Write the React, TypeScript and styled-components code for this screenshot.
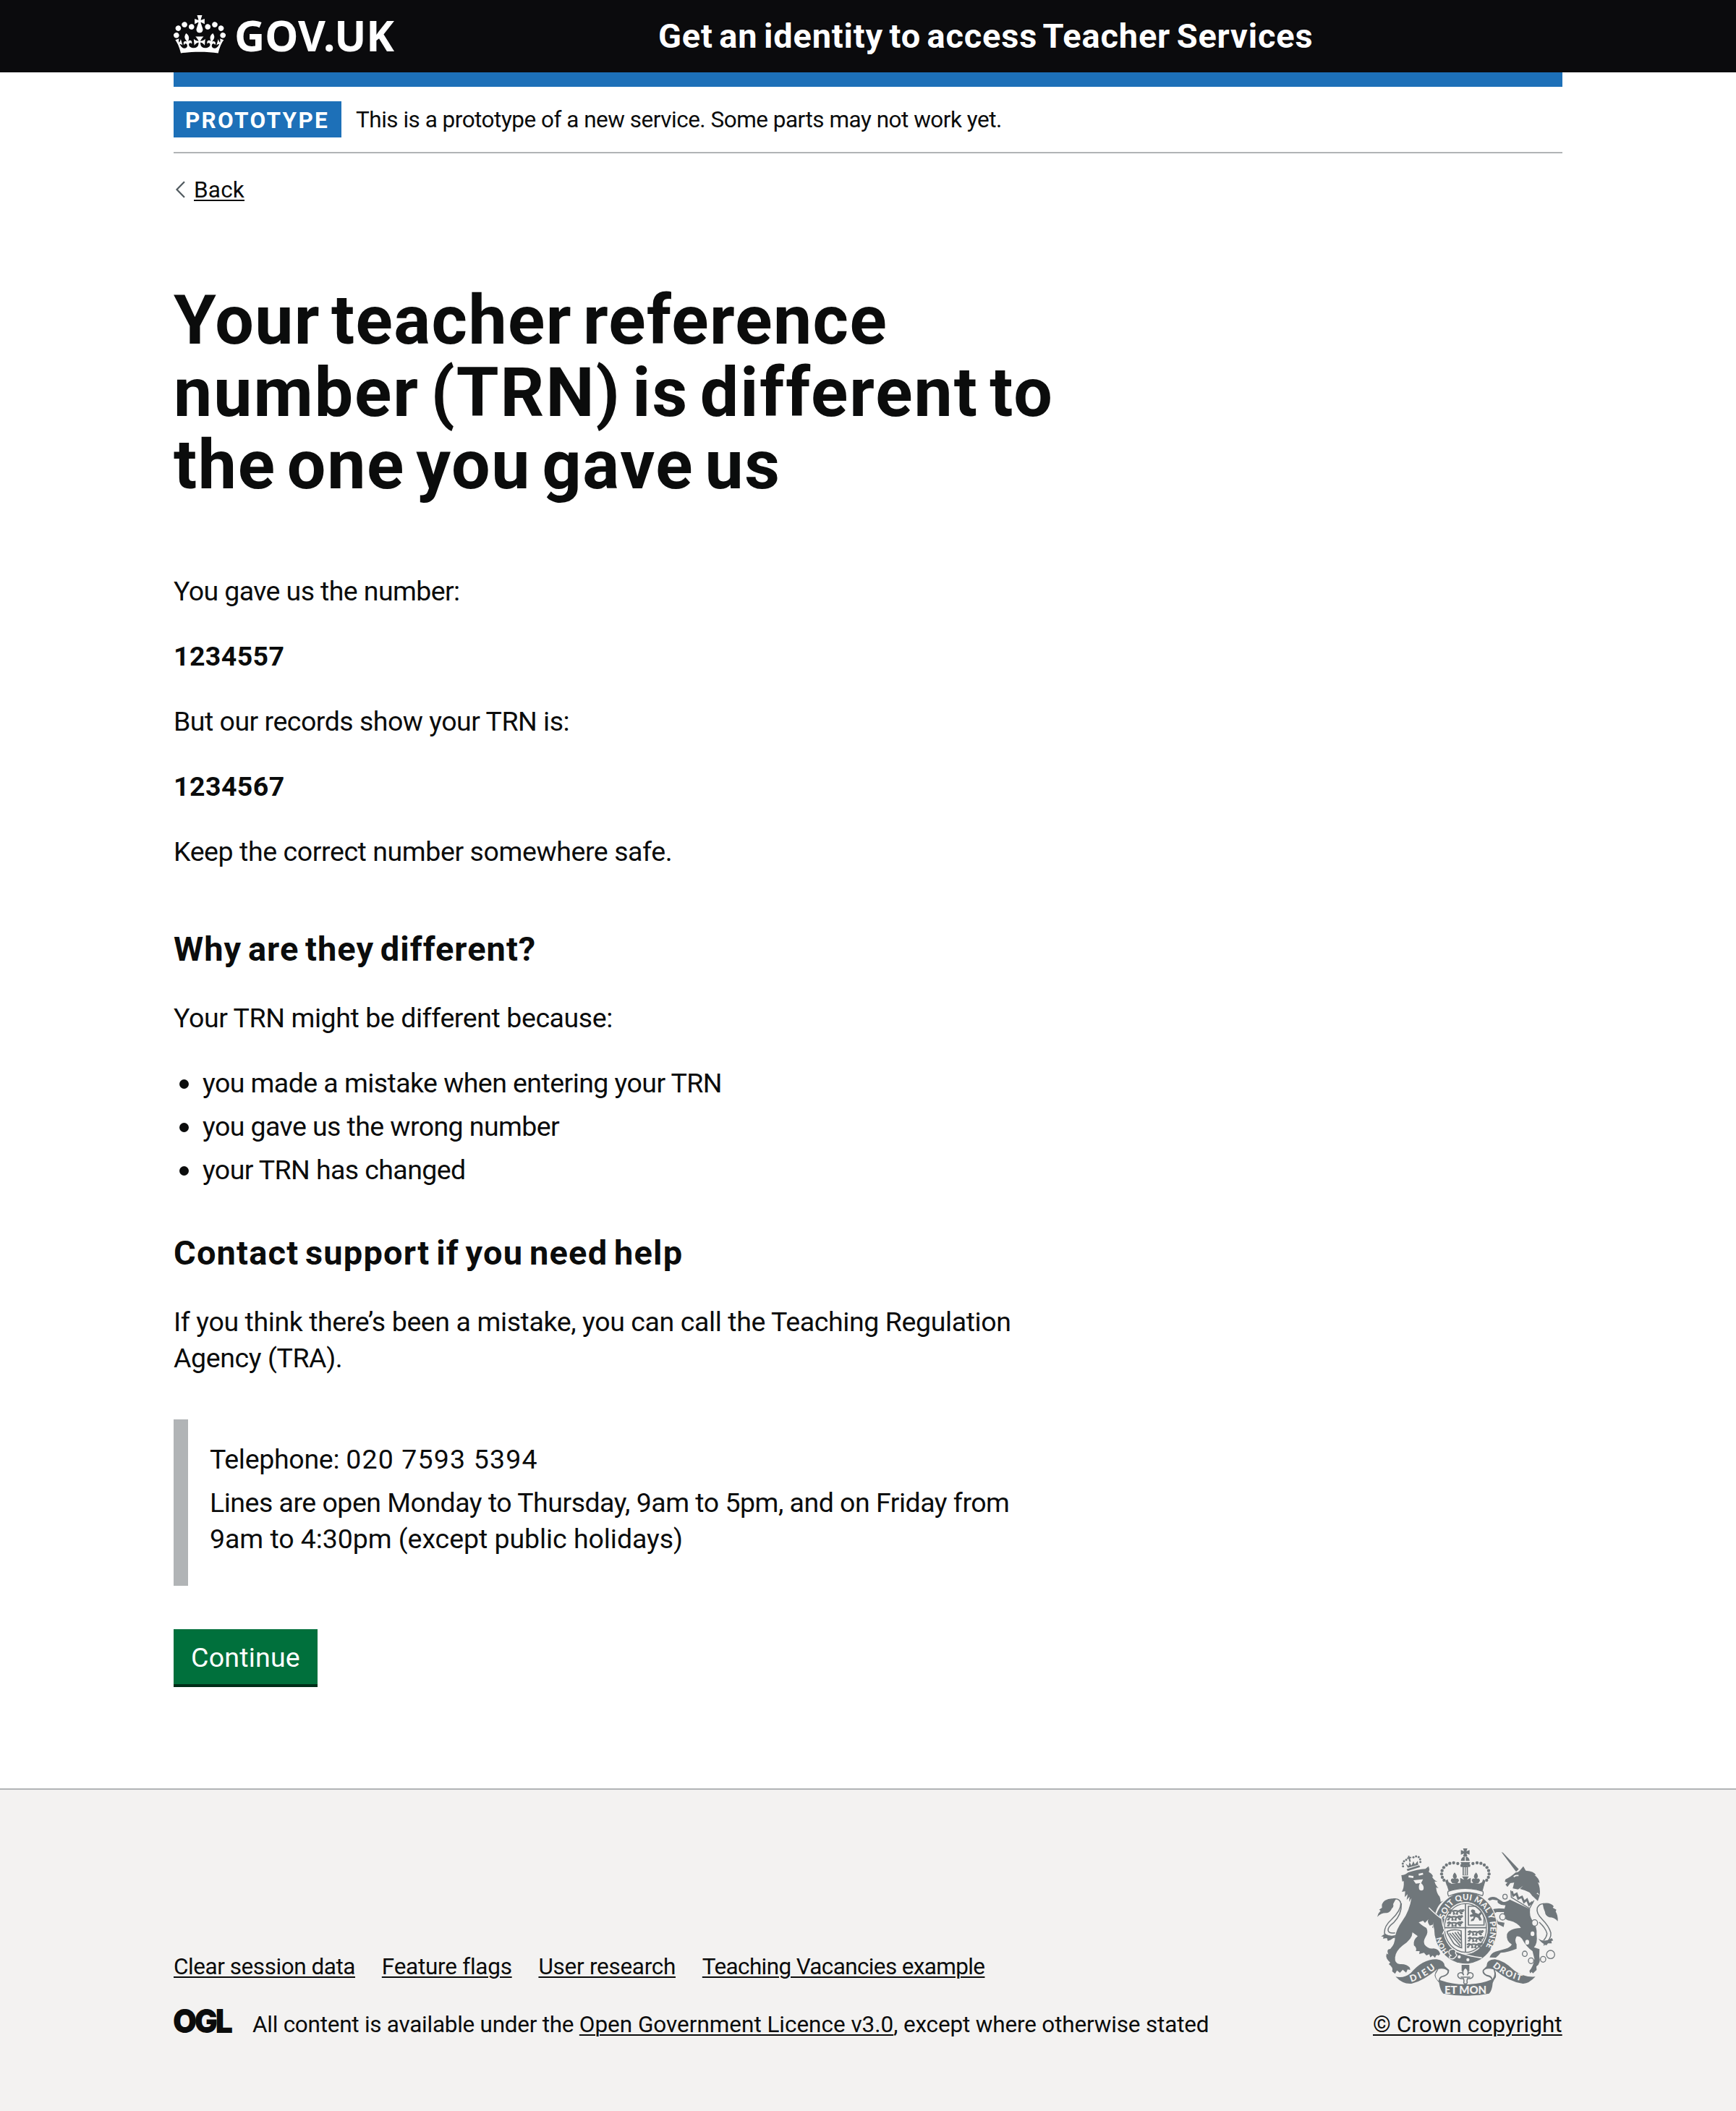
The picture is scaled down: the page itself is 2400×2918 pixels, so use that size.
import React from "react";
import styled, { createGlobalStyle } from "styled-components";

const ink = "#0b0c0c";
const blue = "#1d70b8";
const midGrey = "#b1b4b6";
const paleGrey = "#f3f2f1";
const armsGrey = "#70777b";
const sans = `Roboto, "Liberation Sans", sans-serif`;

const GlobalStyle = createGlobalStyle`
  html, body { margin: 0; padding: 0; background: ${paleGrey}; }
  body { font-family: ${sans}; color: ${ink}; }
  *, *::before, *::after { box-sizing: border-box; }
`;

const Page = styled.div`
  width: 2400px;
  min-height: 2918px;
  display: flex;
  flex-direction: column;
  background: #fff;
`;

const Container = styled.div`
  width: 1920px;
  margin: 0 auto;
`;

/* Header */
const Header = styled.header`
  height: 100px;
  background: #0b0b0d;
  color: #fff;
`;
const HeaderInner = styled(Container)`
  display: grid;
  grid-template-columns: 670px 1fr;
  align-items: start;
`;
const Logo = styled.a`
  display: flex;
  align-items: flex-start;
  color: inherit;
  gap: 12px;
`;
const CrownMark = styled.svg`
  display: block;
  width: 72px;
  height: 53px;
  margin-top: 21px;
  fill: #fff;
`;
const LogoText = styled.span`
  font: 700 58.4px/79px "Noto Sans", sans-serif;
  margin-top: 9px;
`;
const ServiceName = styled.a`
  font-size: 47px;
  font-weight: 700;
  line-height: 55px;
  padding-top: 22px;
  letter-spacing: 0.82px;
  word-spacing: -4px;
  white-space: nowrap;
`;

/* Phase banner */
const BlueBar = styled.div`
  height: 20px;
  background: ${blue};
`;
const PhaseBanner = styled.div`
  height: 92px;
  display: flex;
  align-items: center;
  gap: 20px;
  padding-top: 1px;
  border-bottom: 2px solid ${midGrey};
`;
const Tag = styled.strong`
  width: 232px;
  height: 50px;
  padding: 8px 0 0 16px;
  margin-top: -1px;
  background: ${blue};
  color: #fff;
  font-size: 31.5px;
  line-height: 37px;
  letter-spacing: 2.308px;
`;
const SmallText = styled.span<{ $track: number }>`
  font-size: 31.5px;
  line-height: 40px;
  letter-spacing: ${(p) => p.$track}px;
  white-space: pre;
`;
const PhaseText = styled(SmallText)`
  padding-top: 1px;
`;
const BackRow = styled.a`
  display: flex;
  align-items: center;
  width: max-content;
  margin-top: 31px;
  height: 40px;
`;
const Chevron = styled.svg`
  width: 28px;
  height: 40px;
  fill: none;
  stroke: #505a5f;
  stroke-width: 2.2;
`;
const Link = styled(SmallText)`
  color: ${ink};
  text-decoration: underline;
  text-decoration-thickness: 2px;
  text-underline-offset: 3px;
`;

/* Main content */
const Main = styled.main`
  flex: 1;
  padding-top: 110px;
`;
const Heading = styled.h1`
  margin: 0 0 99px;
  font-size: 95px;
  line-height: 100px;
  font-weight: 700;
  word-spacing: -10px;
`;
const SubHeading = styled.h2<{ $gap: number }>`
  margin: ${(p) => p.$gap}px 0 40px;
  font-size: 47px;
  line-height: 60px;
  font-weight: 700;
  word-spacing: -4px;
`;
const Paragraph = styled.p<{ $bold?: boolean }>`
  margin: 0 0 40px;
  font-size: 37.5px;
  line-height: 50px;
  font-weight: ${(p) => (p.$bold ? 700 : 400)};
`;
const Line = styled.span<{ $track: number }>`
  display: block;
  letter-spacing: ${(p) => p.$track}px;
  white-space: nowrap;
`;
const PhoneNumber = styled.span`
  letter-spacing: 1.15px;
`;
const BulletList = styled.ul`
  list-style: none;
  margin: 0;
  padding: 0;
  display: flex;
  flex-direction: column;
  gap: 10px;
  font-size: 37.5px;
  line-height: 50px;
`;
const Bullet = styled.li`
  display: flex;
  align-items: center;
  padding-left: 8px;
  &::before {
    content: "";
    width: 13px;
    height: 13px;
    margin: 3px 19px 0 0;
    border-radius: 50%;
    background: ${ink};
  }
`;
const Inset = styled.div`
  width: 1200px;
  margin-top: 60px;
  padding: 30px 0 40px 30px;
  border-left: 20px solid ${midGrey};
  display: flex;
  flex-direction: column;
  gap: 10px;
  p { margin: 0; }
`;
const Button = styled.button`
  display: block;
  width: 199px;
  height: 76px;
  margin: 60px 0 0;
  padding: 2px 0 0 0;
  border: 0;
  background: #00703c;
  box-shadow: 0 4px 0 #002d18;
  color: #fff;
  font: 400 37.5px/44px ${sans};
  letter-spacing: 0.2px;
`;

/* Footer */
const Footer = styled.footer`
  height: 446px;
  border-top: 2px solid ${midGrey};
  background: ${paleGrey};
`;
const FooterInner = styled(Container)`
  height: 345px;
  display: flex;
  justify-content: space-between;
  align-items: flex-end;
`;
const FooterLinks = styled.nav`
  display: flex;
  gap: 36.8px;
  margin-bottom: 40px;
`;
const Licence = styled.div`
  display: flex;
  align-items: center;
`;
const LicenceLogo = styled.svg`
  width: 82px;
  height: 36px;
  margin: -4px 27px 8px 0;
  overflow: visible;
  fill: ${ink};
  font: 900 46px Inter, sans-serif;
`;
const Copyright = styled.div`
  width: 262px;
  display: flex;
  flex-direction: column;
`;
const ArmsImage = styled.svg`
  width: 250px;
  height: 204px;
  margin: 0 0 20px 6px;
  fill: ${armsGrey};
  font-family: Lato, "Noto Sans", sans-serif;
  font-weight: 900;
`;

const Crown = () => (
  <CrownMark viewBox="0 0 132 97" aria-hidden="true">
    <path d="M25 30.2c3.5 1.5 7.7-.2 9.1-3.7 1.5-3.6-.2-7.8-3.9-9.2-3.6-1.4-7.6.3-9.1 3.9-1.4 3.5.3 7.5 3.9 9zM9 39.5c3.6 1.5 7.8-.2 9.2-3.7 1.5-3.6-.2-7.8-3.9-9.1-3.6-1.5-7.6.2-9.1 3.8-1.4 3.5.3 7.5 3.8 9zM4.4 57.2c3.5 1.5 7.7-.2 9.1-3.8 1.5-3.6-.2-7.7-3.9-9.1-3.5-1.5-7.6.3-9.1 3.8-1.4 3.5.3 7.6 3.9 9.1zm38.3-21.4c3.5 1.5 7.7-.2 9.1-3.8 1.5-3.6-.2-7.7-3.9-9.1-3.6-1.5-7.6.3-9.1 3.8-1.3 3.6.4 7.7 3.9 9.1zm64.4-5.6c-3.6 1.5-7.8-.2-9.1-3.7-1.5-3.6.2-7.8 3.8-9.2 3.6-1.4 7.7.3 9.2 3.9 1.3 3.5-.4 7.5-3.9 9zm15.9 9.3c-3.6 1.5-7.7-.2-9.1-3.7-1.5-3.6.2-7.8 3.7-9.1 3.6-1.5 7.7.2 9.2 3.8 1.5 3.5-.3 7.5-3.8 9zm4.7 17.7c-3.6 1.5-7.8-.2-9.2-3.8-1.5-3.6.2-7.7 3.9-9.1 3.6-1.5 7.7.3 9.2 3.8 1.3 3.5-.4 7.6-3.9 9.1zM89.3 35.8c-3.6 1.5-7.8-.2-9.2-3.8-1.4-3.6.2-7.7 3.9-9.1 3.6-1.5 7.7.3 9.2 3.8 1.4 3.6-.3 7.7-3.9 9.1zM69.7 17.7l8.9 4.7V9.3l-8.9 2.8c-.2-.3-.5-.6-.9-.9L72.4 0H59.6l3.5 11.2c-.3.3-.6.5-.9.9l-8.8-2.8v13.1l8.8-4.7c.3.3.6.7.9.9l-5 15.4v.1c-.2.8-.4 1.6-.4 2.4 0 4.1 3.1 7.5 7 8.1h.2c.3 0 .7.1 1 .1.4 0 .7 0 1-.1h.2c4-.6 7.1-4.1 7.1-8.1 0-.8-.1-1.7-.4-2.4V34l-5.1-15.4c.4-.2.7-.6 1-.9zM66 92.8c16.9 0 32.8 1.1 47.1 3.2 4-16.9 8.9-26.7 14-33.5l-9.6-3.4c1 4.9 1.1 7.2 0 10.2-1.5-1.4-3-4.3-4.2-8.7L108.6 76c2.8-2 5-3.2 7.5-3.3-4.4 9.4-10 11.9-13.6 11.2-4.3-.8-6.3-4.6-5.6-7.9 1-4.7 5.7-5.9 8-.5 4.3-8.7-3-11.4-7.6-8.8 7.1-7.2 7.9-13.5 2.1-21.1-8 6.1-8.1 12.3-4.5 20.8-4.7-5.4-12.1-2.5-9.5 6.2 3.4-5.2 7.9-2 7.2 3.1-.6 4.3-6.4 7.8-13.5 7.2-10.3-.9-10.9-8-11.2-13.8 2.5-.5 7.1 1.8 11 7.3L80.2 60c-4.1 4.4-8 5.3-12.3 5.4 1.4-4.4 8-11.6 8-11.6H55.5s6.4 7.2 7.9 11.6c-4.2-.1-8-1-12.3-5.4l1.4 16.4c3.9-5.5 8.5-7.7 10.9-7.3-.3 5.8-.9 12.8-11.1 13.8-7.2.6-12.9-2.9-13.5-7.2-.7-5 3.8-8.3 7.1-3.1 2.7-8.7-4.6-11.6-9.4-6.2 3.7-8.5 3.6-14.7-4.6-20.8-5.8 7.6-5 13.9 2.2 21.1-4.7-2.6-11.9.1-7.7 8.8 2.3-5.5 7.1-4.2 8.1.5.7 3.3-1.3 7.1-5.7 7.9-3.5.7-9-1.8-13.5-11.2 2.5.1 4.7 1.3 7.5 3.3l-4.7-15.4c-1.2 4.4-2.7 7.2-4.3 8.7-1.1-3-.9-5.3 0-10.2l-9.5 3.4c5 6.9 9.9 16.7 14 33.5 14.8-2.1 30.8-3.2 47.7-3.2z" />
  </CrownMark>
);

const crownBeads: [number, number][] = [
  [423, 143], [406, 135], [389, 132], [373, 134], [359, 141], [348, 151], [341, 164], [339, 178], [342, 192], [349, 204],
];
const smallBeads: [number, number][] = [
  [179, 146], [178, 135], [183, 125], [192, 119], [222, 109], [233, 105], [244, 108], [250, 117], [251, 128],
];
const bodyRings: [number, number, number][] = [
  [602, 272, 10], [592, 356, 13], [725, 381, 13], [684, 509, 11], [710, 538, 12], [760, 532, 12],
];
const bodySpots: [number, number][] = [[716, 426], [694, 461]];

const MiniLion = ({ x, y }: { x: number; y: number }) => (
  <path
    transform={`translate(${x} ${y})`}
    fill="none"
    stroke={armsGrey}
    strokeWidth="6.5"
    d="M2 8 l8 -5 l8 4 q14 -4 24 1 l10 -5 q6 0 4 6 l8 -2 M12 8 l-4 9 l-6 0 M22 10 l4 8 l-6 2 M40 9 l-5 9 l6 2 M48 9 l6 8 l6 -1 M56 6 q8 -8 10 0"
  />
);

const RoyalArms = () => (
  <ArmsImage viewBox="72 72 750 612" aria-label="Royal coat of arms">
    <defs>
      <path id="garterTop" d="M352 366 C362 318 394 286 438 286 C503 286 541 345 541 402 C541 452 524 492 488 514" />
      <path id="garterLow" d="M368 502 Q342 472 336 430" />
      <path id="ribbonLeft" d="M212 626 Q270 610 318 566" />
      <path id="ribbonRight" d="M550 562 Q600 606 676 624" />
    </defs>

    {/* Lion */}
    <path d="M194 158 L246 142 L250 149 L198 166Z M199 152 L190 135 L202 145 L206 129 L214 143 L222 125 L228 139 L240 124 L242 140Z" />
    <path d="M202 102h6v6h6v6h-6v14h-6v-14h-6v-6h6z" transform="rotate(-14 206 114)" />
    {smallBeads.map(([x, y]) => <circle key={`${x}-${y}`} cx={x} cy={y} r="4.5" />)}
    <path d="M172 183 Q188 183 200 172 Q240 158 272 157 L285 146 Q291 158 286 170 Q300 176 304 190 L299 188 Q305 202 322 210 L310 209 Q312 222 326 237 L316 234 Q318 260 331 272 Q335 284 335 294 L347 289 Q330 301 320 322 L313 340 L338 368 Q340 390 348 412 L340 423 L336 411 L330 428 L322 412 L314 424 Q306 414 310 398 L300 402 L304 388 L290 392 Q278 378 284 366 L270 381 L262 372 L244 379 Q254 390 276 402 Q286 420 272 440 Q262 456 268 470 Q282 490 306 487 Q328 489 333 510 L326 517 Q318 508 312 526 L302 516 L292 524 L288 511 L276 516 L266 505 L246 510 L248 498 L232 498 Q238 484 224 474 Q220 452 240 436 L218 420 Q218 448 178 474 Q148 498 146 524 Q144 550 166 552 Q194 550 207 566 L209 576 L198 574 L192 587 L178 575 L166 588 L154 578 L146 592 L134 582 Q140 566 120 552 L126 545 Q104 528 111 508 L118 512 Q108 490 126 489 Q146 468 146 440 Q150 410 178 370 Q206 330 214 278 L204 294 L206 272 L194 286 L198 262 L186 274 L188 250 L174 252 Q184 236 182 208 L176 209Z" />
    <path d="M202 188 l20 3 M244 181 l18 -4" stroke={paleGrey} strokeWidth="8" fill="none" />
    <path d="M222 204 L262 200 L254 216 Q268 228 264 242 Q256 252 246 242 Q242 226 250 216 L232 218Z" fill={paleGrey} />
    <path d="M152 440 Q112 446 102 424 Q100 394 132 366 Q170 330 170 300 Q166 278 138 282 M146 422 Q120 426 117 412 Q116 398 140 380 Q174 346 172 300" fill="none" stroke={armsGrey} strokeWidth="4.5" />
    <path d="M150 281 Q122 276 104 288 Q88 300 92 318 L80 326 L86 331 Q76 340 72 356 Q90 338 112 340 Q128 336 132 322 Q142 314 138 303 Q144 290 150 281Z M152 430 Q128 440 104 426 L88 437 L98 438 L96 446 L112 444 L116 456 Q140 448 152 430Z" />

    {/* Unicorn */}
    <path d="M587 87 L594 90 L659 158 L648 169Z" />
    <path d="M646 172 Q660 170 668 158 L678 146 L688 164 Q724 166 730 184 L724 182 Q746 198 745 216 L738 212 Q750 236 746 266 L737 256 L730 262 L714 252 L706 256 L684 246 L664 240 Q680 226 690 202 Q684 226 656 242 L634 238 L640 214 L624 216 L612 232 L604 222 L612 214 L601 210 L604 200 Q624 192 646 172Z" />
    <path d="M690 236 L714 268 L738 290 L746 266Z" />
    <path d="M638 190 q8 -8 20 -5" stroke={paleGrey} strokeWidth="5" fill="none" />
    <path d="M630 250 L636 268 L650 260 L657 280 L672 273 L681 294 L693 284 L702 306 L717 294" fill="none" stroke={armsGrey} strokeWidth="9" />
    <path d="M626 246 L628 275 L704 321 L722 288" fill="none" stroke={armsGrey} strokeWidth="4" />
    <path d="M622 284 L706 324 Q702 352 716 372 Q736 398 733 428 Q738 466 722 482 L745 490 L744 520 Q752 548 732 562 L733 576 L718 590 L712 584 L706 590 L703 580 Q720 560 724 530 L716 498 Q690 480 672 446 Q662 434 650 437 Q640 452 650 470 L650 488 Q616 502 584 505 Q574 518 564 525 L538 524 Q544 506 562 500 L604 488 Q624 482 630 470 Q606 456 610 428 Q620 404 668 402 Q654 380 622 372 Q590 366 598 336 L568 336 Q552 340 566 362 L574 376 L600 380 L596 398 L570 385 L560 368 Q546 346 548 326 Q560 318 600 322 L604 308 L586 306 Q566 298 572 288 L550 284 L538 289 L530 283 Q544 268 566 276 L594 294 Q610 294 622 284Z" />
    <path d="M762 474 Q796 446 792 422 Q784 394 756 366 Q730 340 736 318 Q746 296 774 303 M762 454 Q776 438 776 424 Q770 402 744 378" fill="none" stroke={armsGrey} strokeWidth="4.5" />
    <path d="M758 300 Q790 294 804 312 L800 318 L815 326 L812 334 Q822 350 821 374 Q806 358 786 358 Q768 352 768 336 L762 320Z M740 446 Q764 464 796 444 L802 454 L794 456 L796 466 L780 466 L774 474 Q754 466 740 446Z" />
    {bodyRings.map(([x, y, r]) => (
      <ellipse key={`${x}-${y}`} cx={x} cy={y} rx={r - 1} ry={r} fill={paleGrey} stroke={armsGrey} strokeWidth="4" />
    ))}
    <circle cx="791" cy="512" r="17" fill={paleGrey} stroke={armsGrey} strokeWidth="4" />
    {bodySpots.map(([x, y]) => <ellipse key={x} cx={x} cy={y} rx="8" ry="10" fill={paleGrey} />)}

    {/* Garter and shield */}
    <ellipse cx="438" cy="402" rx="134" ry="152" fill={paleGrey} />
    <ellipse cx="438" cy="402" rx="130" ry="148" />
    <ellipse cx="438" cy="402" rx="93" ry="108" fill={paleGrey} />
    <ellipse cx="438" cy="402" rx="87" ry="101" fill="none" stroke={armsGrey} strokeWidth="4" />
    <path d="M438 302V504M351 401H525" stroke={armsGrey} strokeWidth="5" />
    <MiniLion x={366} y={325} /><MiniLion x={360} y={350} /><MiniLion x={360} y={375} />
    <MiniLion x={446} y={412} /><MiniLion x={446} y={438} /><MiniLion x={442} y={464} />
    <path d="M450 312 V390 H515 V360 Q508 330 480 312Z" fill="none" stroke={armsGrey} strokeWidth="5" />
    <path d="M460 332 q4 -10 12 -6 q8 2 6 12 l14 6 l8 -8 l6 6 l-8 10 l8 18 l-10 2 l-6 -12 l-10 -4 l-8 16 l-12 2 l2 -8 l8 -4 l2 -8 l-14 2 l-2 -8 l12 -4z" />
    <path d="M362 416 Q392 404 420 414 L422 484 Q392 476 384 458 L364 424Z M372 424 L416 476 M383 422 L418 466 M394 420 L418 452 M405 418 L419 438" fill="none" stroke={armsGrey} strokeWidth="5" />
    <g fill={paleGrey} fontSize="34">
      <text><textPath href="#garterTop" textLength="382">SOIT QUI MAL Y PENSE</textPath></text>
      <text fontSize="31"><textPath href="#garterLow" textLength="72">HON</textPath></text>
    </g>
    <path d="M392 496 Q440 518 506 526" fill="none" stroke={paleGrey} strokeWidth="5" />
    <path d="M372 494 q24 -10 26 6 q-4 8 4 14 q-12 22 -28 14 q-8 -8 4 -12 q-14 -8 -6 -22z" stroke={paleGrey} strokeWidth="4" />
    <circle cx="412" cy="522" r="6.5" fill={paleGrey} />
    <circle cx="448" cy="534" r="6.5" fill={paleGrey} />
    <path d="M302 330 Q322 348 337 364 Q338 390 349 412 L341 424 L335 411 L330 428 L321 412 L313 422 L306 396Z" />
    <path d="M286 318 Q318 350 340 364 Q341 390 352 412 L342 428" fill="none" stroke={paleGrey} strokeWidth="4" />

    {/* Crown */}
    <path d="M360 222 Q438 206 516 222 L504 268 Q438 252 374 268Z" />
    <path d="M366 250 Q438 226 510 250 Q514 260 508 268 Q438 240 368 270 Q362 260 366 250Z" fill={paleGrey} stroke={armsGrey} strokeWidth="4" />
    {crownBeads.map(([x, y]) => (
      <React.Fragment key={`${x}-${y}`}>
        <circle cx={x} cy={y} r="6.5" />
        <circle cx={875 - x} cy={y} r="6.5" />
      </React.Fragment>
    ))}
    <path d="M428 72h18l-4 12 13-5v19l-13-5 4 12h-18l4-12-13 5v-19l13 5z" />
    <path d="M437 104 Q455 108 455 124 H419 Q419 108 437 104Z" />
    <path d="M418 129H457Q455 142 442 143H448V184H426V143H432Q420 142 418 129Z" />
    <path d="M437 106V126M433 150V182M441 150V182" stroke={paleGrey} strokeWidth="4" />
    <path d="M424 188h28l-8 14 16-8v26h-44v-26l16 8z" />
    <path d="M393 172q-14 16-2 26-12-6-14 8l6 10h22l6-10q-2-14-14-8 12-10-4-26z M482 172q14 16 2 26 12-6 14 8l-6 10h-22l-6-10q2-14 14-8-12-10 4-26z" />
    <path d="M354 206l10-6 4 12 12 6-10 8h-10z M521 206l-10-6-4 12-12 6 10 8h10z" />

    {/* Motto ribbon */}
    <path d="M148 604 Q184 612 212 588 Q262 530 318 532 Q350 536 352 560 L370 576 Q372 596 350 604 Q334 606 332 618 Q382 636 438 636 Q500 636 546 616 Q544 606 526 602 Q504 592 510 576 L526 560 Q524 534 560 532 Q596 536 640 578 Q680 608 728 604 Q700 634 676 633 Q620 626 560 576 Q566 590 564 606 Q554 620 551 630 Q548 664 536 674 Q438 692 346 674 Q334 664 328 628 Q312 612 310 598 Q312 584 322 572 Q262 622 214 633 Q178 636 148 604Z" />
    <path d="M326 572 Q352 568 364 580 Q364 596 344 600 Q328 602 326 622 Q312 608 314 594Z M554 574 Q524 566 514 580 Q514 594 534 598 Q548 602 550 614 Q564 598 554 574Z" fill={paleGrey} />
    <g fill={paleGrey}>
      <text fontSize="38"><textPath href="#ribbonLeft" textLength="118">DIEU</textPath></text>
      <text x="351" y="674" textLength="174" fontSize="45">ET MON</text>
      <text fontSize="37"><textPath href="#ribbonRight" textLength="134">DROIT</textPath></text>
    </g>
    <path d="M422 555h32v26h-32z" />
    <path d="M438 566 Q456 580 445 598 Q454 580 468 592 Q474 606 458 612 L446 612 L444 622 Q448 634 438 634 Q428 634 432 622 L430 612 L418 612 Q402 606 408 592 Q422 580 431 598 Q420 580 438 566Z M418 606H458" fill={paleGrey} stroke={armsGrey} strokeWidth="4.5" />
  </ArmsImage>
);

const headingLines: [string, number][] = [
  ["Your teacher reference", 1.4], ["number (TRN) is different to", 1.96], ["the one you gave us", 1.65],
];
const numberLines: [string, number, boolean][] = [
  ["You gave us the number:", -0.602, false],
  ["1234557", 0.4, true],
  ["But our records show your TRN is:", -0.51, false],
  ["1234567", 0.45, true],
  ["Keep the correct number somewhere safe.", -0.42, false],
];
const reasons: [string, number][] = [
  ["you made a mistake when entering your TRN", -0.57], ["you gave us the wrong number", -0.58], ["your TRN has changed", -0.6],
];
const footerLinks: [string, number][] = [
  ["Clear session data", -0.452], ["Feature flags", -0.258], ["User research", -0.285], ["Teaching Vacancies example", -0.633],
];

export default function App() {
  return (
    <Page>
      <GlobalStyle />
      <Header>
        <HeaderInner>
          <Logo><Crown /><LogoText>GOV.UK</LogoText></Logo>
          <ServiceName>Get an identity to access Teacher Services</ServiceName>
        </HeaderInner>
      </Header>
      <Container>
        <BlueBar />
        <PhaseBanner>
          <Tag>PROTOTYPE</Tag>
          <PhaseText $track={-0.497}>This is a prototype of a new service. Some parts may not work yet.</PhaseText>
        </PhaseBanner>
        <BackRow>
          <Chevron viewBox="0 0 28 40"><path d="M15 8.2 L4.5 19 L15 29.8" /></Chevron>
          <Link as="span" $track={0.197}>Back</Link>
        </BackRow>
      </Container>
      <Main>
        <Container>
          <Heading>
            {headingLines.map(([text, track]) => <Line key={text} $track={track}>{text}</Line>)}
          </Heading>
          {numberLines.map(([text, track, bold]) => (
            <Paragraph key={text} $bold={bold}><Line $track={track}>{text}</Line></Paragraph>
          ))}
          <SubHeading $gap={80}><Line $track={1.03}>Why are they different?</Line></SubHeading>
          <Paragraph><Line $track={-0.42}>Your TRN might be different because:</Line></Paragraph>
          <BulletList>
            {reasons.map(([text, track]) => <Bullet key={text}><Line $track={track}>{text}</Line></Bullet>)}
          </BulletList>
          <SubHeading $gap={60}><Line $track={1.16}>Contact support if you need help</Line></SubHeading>
          <Paragraph>
            <Line $track={-0.4}>If you think there’s been a mistake, you can call the Teaching Regulation</Line>
            <Line $track={-0.4}>Agency (TRA).</Line>
          </Paragraph>
          <Inset>
            <Paragraph><Line $track={-0.3}>Telephone: <PhoneNumber>020 7593 5394</PhoneNumber></Line></Paragraph>
            <Paragraph>
              <Line $track={-0.505}>Lines are open Monday to Thursday, 9am to 5pm, and on Friday from</Line>
              <Line $track={-0.068}>9am to 4:30pm (except public holidays)</Line>
            </Paragraph>
          </Inset>
          <Button>Continue</Button>
        </Container>
      </Main>
      <Footer>
        <FooterInner>
          <div>
            <FooterLinks>
              {footerLinks.map(([text, track]) => <Link key={text} as="a" $track={track}>{text}</Link>)}
            </FooterLinks>
            <Licence>
              <LicenceLogo viewBox="0 0 82 36">
                <text transform="scale(.93 1)" x="-1 31 62" y="34.5">OGL</text>
              </LicenceLogo>
              <SmallText $track={-0.264}>{"All content is available under the "}</SmallText>
              <Link as="a" $track={-0.033}>Open Government Licence v3.0</Link>
              <SmallText $track={-0.17}>, except where otherwise stated</SmallText>
            </Licence>
          </div>
          <Copyright>
            <RoyalArms />
            <Link as="a" $track={0.051}>© Crown copyright</Link>
          </Copyright>
        </FooterInner>
      </Footer>
    </Page>
  );
}
